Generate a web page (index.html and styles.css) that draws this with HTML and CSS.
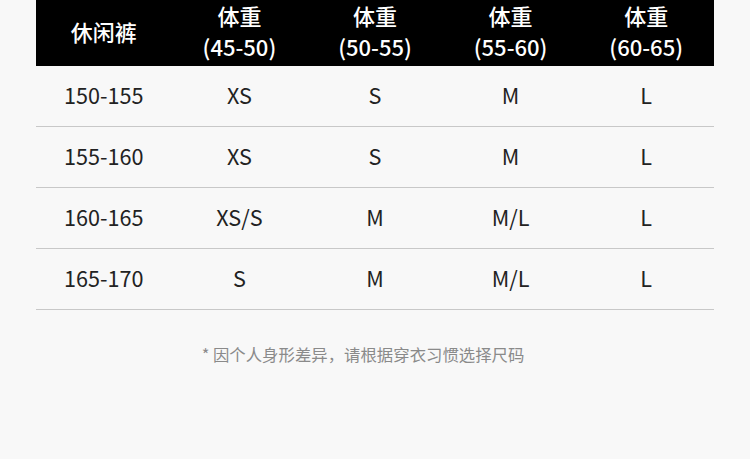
FILE: index.html
```html
<!DOCTYPE html>
<html lang="zh">
<head>
<meta charset="utf-8">
<link rel="stylesheet" href="styles.css">
</head>
<body>
<div class="page">
  <div class="table">
    <div class="row head">
      <div class="cell single">休闲裤</div>
      <div class="cell">体重<br>(45-50)</div>
      <div class="cell">体重<br>(50-55)</div>
      <div class="cell">体重<br>(55-60)</div>
      <div class="cell">体重<br>(60-65)</div>
    </div>
    <div class="row"><div class="cell">150-155</div><div class="cell">XS</div><div class="cell">S</div><div class="cell">M</div><div class="cell">L</div></div>
    <div class="row"><div class="cell">155-160</div><div class="cell">XS</div><div class="cell">S</div><div class="cell">M</div><div class="cell">L</div></div>
    <div class="row"><div class="cell">160-165</div><div class="cell">XS/S</div><div class="cell">M</div><div class="cell">M/L</div><div class="cell">L</div></div>
    <div class="row"><div class="cell">165-170</div><div class="cell">S</div><div class="cell">M</div><div class="cell">M/L</div><div class="cell">L</div></div>
  </div>
  <p class="note">* 因个人身形差异，请根据穿衣习惯选择尺码</p>
</div>
</body>
</html>
```
FILE: styles.css
```css
html, body {
  margin: 0;
  padding: 0;
  background: #f8f8f8;
}
body {
  font-family: "Noto Sans CJK SC", "Noto Sans", sans-serif;
  color: #222;
  height: 459px;
}
.page {
  padding: 0 36px;
}
.table {
  display: flex;
  flex-direction: column;
}
.row {
  display: grid;
  grid-template-columns: repeat(5, 1fr);
  height: 60px;
  border-bottom: 1px solid #c8c8c8;
  align-items: center;
  font-size: 21.6px;
}
.row.head {
  background: #000;
  color: #fff;
  height: 66px;
  border-bottom: none;
  font-weight: 500;
  font-size: 22px;
  line-height: 31px;
}
.cell {
  text-align: center;
  padding-bottom: 4px;
}
.note {
  margin: 32px 0 0;
  padding-right: 24px;
  text-align: center;
  font-size: 16.4px;
  color: #8a8a8a;
}
```
